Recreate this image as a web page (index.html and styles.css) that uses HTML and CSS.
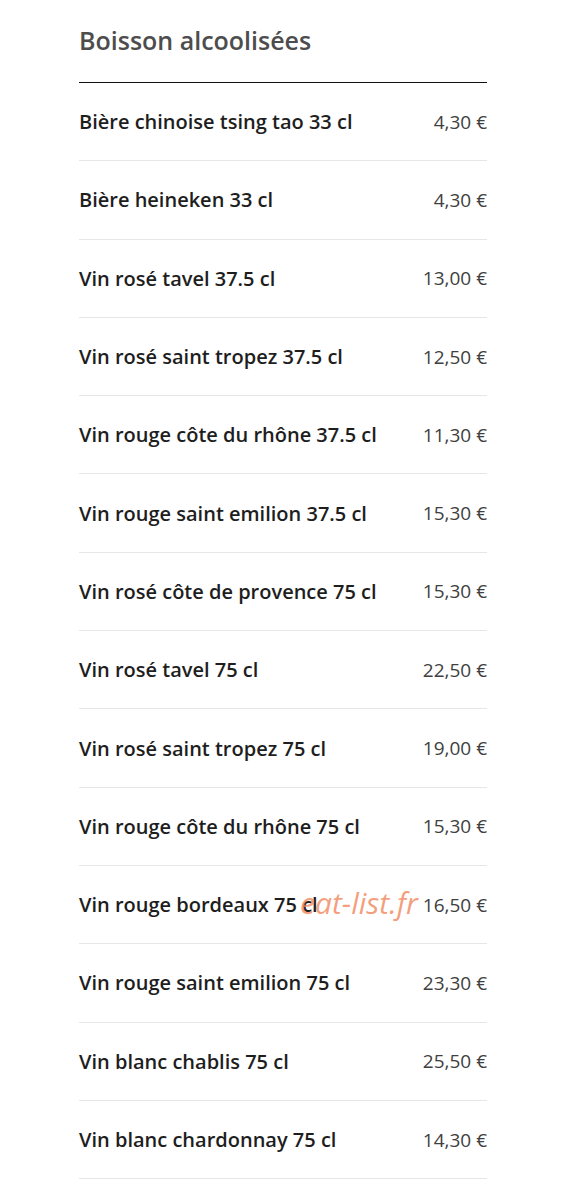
FILE: index.html
```html
<!DOCTYPE html>
<html lang="fr">
<head>
    <meta charset="UTF-8">
    <meta name="viewport" content="width=device-width, initial-scale=1.0">
    <title>Boisson alcoolisées</title>
    <link rel="stylesheet" href="styles.css">
</head>
<body>
    <section class="menu-section">
        <h2 class="section-title">Boisson alcoolisées</h2>

        <ul class="menu-list">
            <li class="menu-item"><span class="item-name">Bière chinoise tsing tao 33 cl</span><span class="item-price">4,30 €</span></li>
            <li class="menu-item"><span class="item-name">Bière heineken 33 cl</span><span class="item-price">4,30 €</span></li>
            <li class="menu-item"><span class="item-name">Vin rosé tavel 37.5 cl</span><span class="item-price">13,00 €</span></li>
            <li class="menu-item"><span class="item-name">Vin rosé saint tropez 37.5 cl</span><span class="item-price">12,50 €</span></li>
            <li class="menu-item"><span class="item-name">Vin rouge côte du rhône 37.5 cl</span><span class="item-price">11,30 €</span></li>
            <li class="menu-item"><span class="item-name">Vin rouge saint emilion 37.5 cl</span><span class="item-price">15,30 €</span></li>
            <li class="menu-item"><span class="item-name">Vin rosé côte de provence 75 cl</span><span class="item-price">15,30 €</span></li>
            <li class="menu-item"><span class="item-name">Vin rosé tavel 75 cl</span><span class="item-price">22,50 €</span></li>
            <li class="menu-item"><span class="item-name">Vin rosé saint tropez 75 cl</span><span class="item-price">19,00 €</span></li>
            <li class="menu-item"><span class="item-name">Vin rouge côte du rhône 75 cl</span><span class="item-price">15,30 €</span></li>
            <li class="menu-item watermarked"><span class="item-name">Vin rouge bordeaux 75 cl</span><span class="item-price">16,50 €</span><span class="watermark">eat-list.fr</span></li>
            <li class="menu-item"><span class="item-name">Vin rouge saint emilion 75 cl</span><span class="item-price">23,30 €</span></li>
            <li class="menu-item"><span class="item-name">Vin blanc chablis 75 cl</span><span class="item-price">25,50 €</span></li>
            <li class="menu-item"><span class="item-name">Vin blanc chardonnay 75 cl</span><span class="item-price">14,30 €</span></li>
        </ul>
    </section>
</body>
</html>
```

FILE: styles.css
```css
body {
    margin: 0;
    background-color: #fff;
    font-family: 'Open Sans', sans-serif;
    color: #222;
}

.menu-section {
    width: 408px;
    margin-left: 79px;
    padding-top: 23px;
}

.section-title {
    margin: 0;
    font-size: 25px;
    font-weight: 600;
    color: #4d4d4d;
    line-height: 34px;
    padding-bottom: 25px;
    border-bottom: 1px solid #111;
}

.menu-list {
    list-style: none;
    margin: 0;
    padding: 0;
}

.menu-item {
    display: flex;
    justify-content: space-between;
    align-items: center;
    height: 77.3px;
    border-bottom: 1px solid #e6e6e6;
}

.item-name {
    font-size: 20px;
    font-weight: 600;
    color: #1e1e1e;
}

.item-price {
    font-size: 19px;
    font-weight: 500;
    color: #404040;
}

.watermarked {
    position: relative;
}

.watermark {
    position: absolute;
    left: 221px;
    top: 16px;
    font-size: 30px;
    font-weight: 400;
    font-style: italic;
    color: rgba(240, 128, 82, 0.75);
}
```
